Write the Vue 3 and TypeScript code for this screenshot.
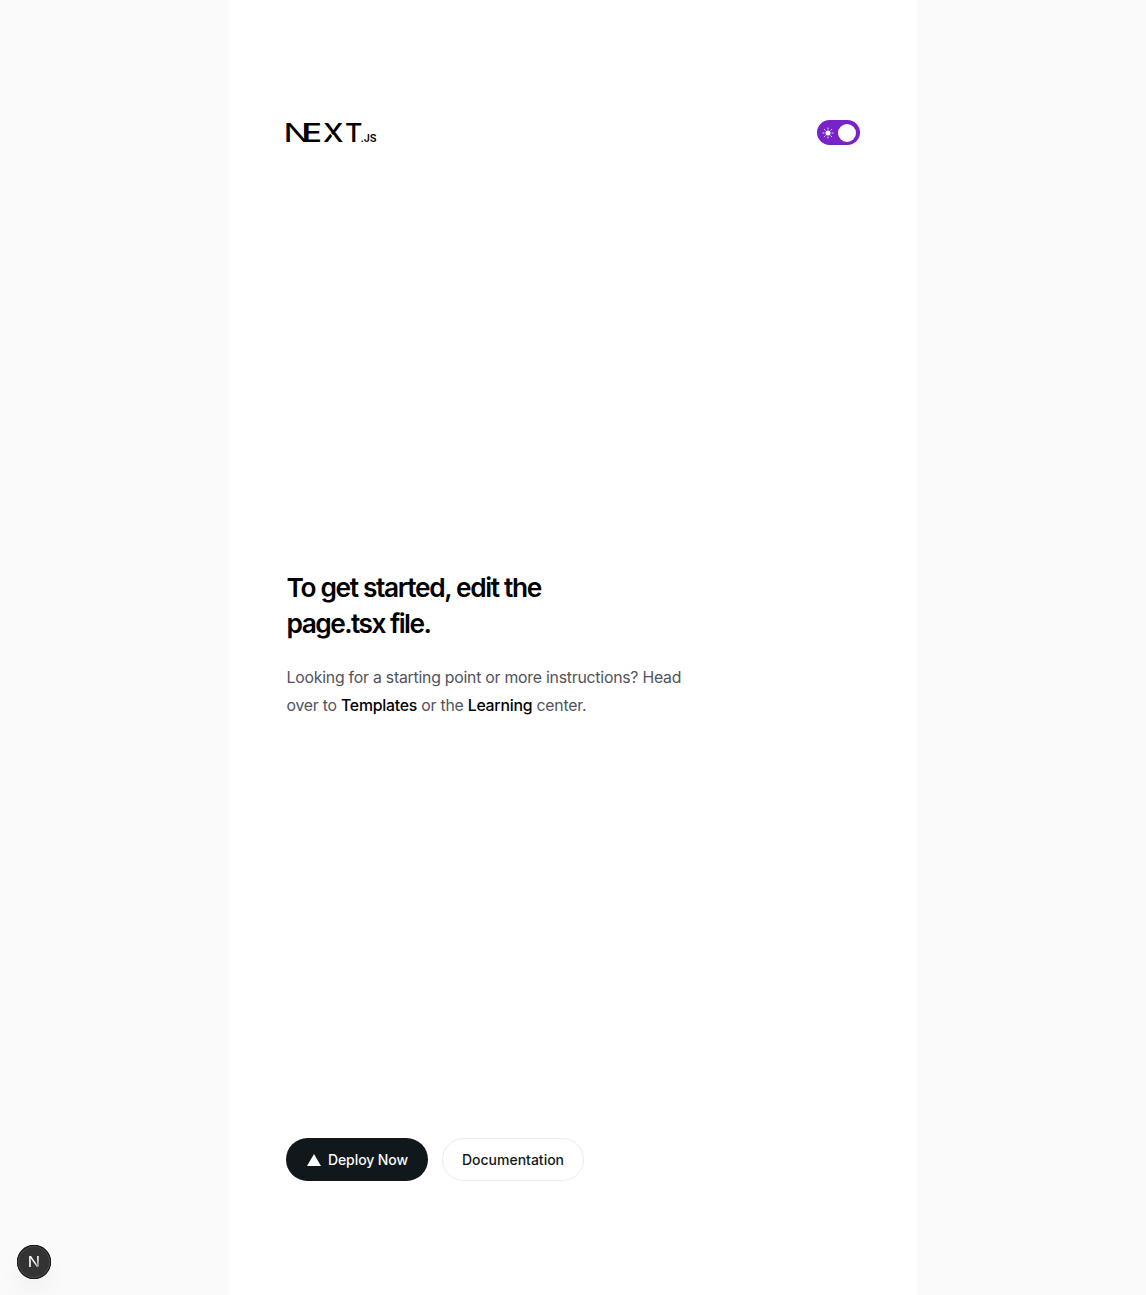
<script setup lang="ts">
import { ref } from 'vue'

const light = ref<boolean>(true)
const rays: number[] = [0, 45, 90, 135, 180, 225, 270, 315]
</script>

<template>
  <div class="page">
    <main class="sheet">
      <header class="top">
        <svg class="logo" viewBox="0 0 92 20" role="img" aria-label="Next.js logo">
          <text class="word thin" transform="translate(-2.8 18.7) scale(1.44 1)">N</text>
          <text class="word" transform="translate(16.2 18.7) scale(1.3 1)">E</text>
          <text class="word" transform="translate(37 18.7) scale(1.16 1)">X</text>
          <line class="notch" x1="44.4" y1="9.9" x2="47.7" y2="13.9" />
          <text class="word" transform="translate(59 18.7) scale(1.06 1)">T</text>
          <text class="suffix" x="74.5" y="18.6" textLength="16.2">.JS</text>
        </svg>
        <button class="switch" type="button" role="switch" :aria-checked="light" @click="light = !light">
          <svg class="sun" viewBox="0 0 12 12">
            <circle cx="6" cy="6" r="2.5" fill="#fff" />
            <line v-for="a in rays" :key="a" x1="6" y1="2" x2="6" y2="1" :transform="`rotate(${a} 6 6)`" />
          </svg>
          <span class="knob"></span>
        </button>
      </header>

      <section class="intro">
        <h1>To get started, edit the<br /><span class="second">page.tsx file.</span></h1>
        <p>
          Looking for a starting point or more instructions? Head<br />over to
          <a>Templates</a> or the <a>Learning</a> center.
        </p>
      </section>

      <nav class="actions">
        <a class="btn primary">
          <svg class="triangle" viewBox="0 0 14 12"><path d="M7 0 14 12H0Z" fill="#fff" /></svg>
          <span>Deploy Now</span>
        </a>
        <a class="btn outline"><span>Documentation</span></a>
      </nav>
    </main>

    <button class="devtools" type="button">
      <svg viewBox="0 0 34 34">
        <defs>
          <linearGradient id="fade" x1="0" y1="0" x2="1" y2="1">
            <stop offset="0.55" stop-color="#fff" />
            <stop offset="0.85" stop-color="#fff" stop-opacity="0.35" />
          </linearGradient>
        </defs>
        <text transform="translate(10.7 22.2) scale(1.14 1)" fill="url(#fade)">N</text>
      </svg>
    </button>
  </div>
</template>

<style>
body {
  background: #fafafa;
}
</style>

<style scoped>
.page {
  display: flex;
  justify-content: center;
  height: 1295px;
  background: #fafafa;
  font-family: Inter, 'Liberation Sans', sans-serif;
  color: #000;
}

.sheet {
  box-sizing: border-box;
  display: flex;
  flex-direction: column;
  justify-content: space-between;
  width: 688px;
  padding: 120px 57px 114px;
  background: #fff;
}

.top {
  display: flex;
  align-items: center;
  justify-content: space-between;
  height: 25px;
}

.logo {
  display: block;
  width: 92px;
  height: 20px;
  overflow: visible;
}

.word {
  font-size: 25.2px;
  font-weight: 500;
}

.thin {
  font-weight: 400;
}

.notch {
  stroke: #fff;
  stroke-width: 1.3;
}

.suffix {
  font-size: 10.5px;
  font-weight: 600;
}

.switch {
  display: flex;
  align-items: center;
  justify-content: space-between;
  box-sizing: border-box;
  width: 43px;
  height: 25px;
  padding: 0 4px 0 5px;
  border: 0;
  border-radius: 13px;
  background: #7723c8;
}

.sun {
  width: 12px;
  height: 12px;
  stroke: #fff;
  stroke-width: 0.9;
  stroke-linecap: round;
}

.sun circle {
  stroke: none;
}

.knob {
  width: 18px;
  height: 18px;
  border-radius: 50%;
  background: #fff;
}

.intro {
  display: flex;
  flex-direction: column;
  gap: 22px;
  padding-top: 7px;
  padding-left: 0.6px;
}

h1 {
  margin: 0;
  font-size: 26.3px;
  font-weight: 600;
  line-height: 36px;
  letter-spacing: -1.36px;
  white-space: nowrap;
}

.second {
  letter-spacing: -1.55px;
}

p {
  margin: 0;
  font-size: 15.8px;
  line-height: 28px;
  letter-spacing: -0.23px;
  color: #52525b;
  white-space: nowrap;
}

p a {
  font-weight: 500;
  color: #000;
}

.actions {
  display: flex;
  gap: 14px;
}

.btn {
  box-sizing: border-box;
  display: flex;
  align-items: center;
  justify-content: center;
  gap: 7px;
  width: 142px;
  height: 43px;
  border-radius: 22px;
  font-size: 14px;
  font-weight: 500;
  white-space: nowrap;
}

.primary {
  padding-left: 1px;
  background: #11181c;
  color: #fafafa;
  letter-spacing: -0.08px;
}

.outline {
  border: 1px solid #ebebeb;
  color: #11181c;
}

.triangle {
  width: 14px;
  height: 12px;
}

.devtools {
  position: fixed;
  left: 17px;
  bottom: 16px;
  box-sizing: border-box;
  width: 34px;
  height: 34px;
  padding: 0;
  border: 0;
  border-radius: 50%;
  background: #333;
  box-shadow: inset 0 0 0 1px #151515, inset 0 0 0 2px #4a4a4a, 0 14px 28px -6px rgba(0, 0, 0, 0.09);
}

.devtools svg {
  display: block;
  width: 34px;
  height: 34px;
}

.devtools text {
  font-family: Inter, sans-serif;
  font-size: 14.4px;
  font-weight: 400;
}
</style>
